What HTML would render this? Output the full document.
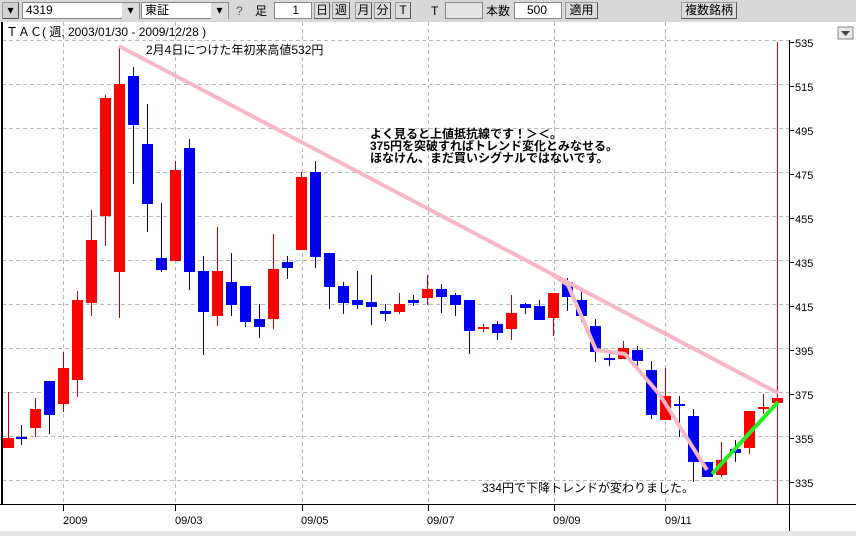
<!DOCTYPE html>
<html><head><meta charset="utf-8"><style>
body{margin:0;width:856px;height:536px;overflow:hidden;background:#fff;font-family:"Liberation Sans","Noto Sans CJK JP",sans-serif;}
.tb{position:absolute;left:0;top:0;width:856px;height:22px;background:#d8d8d8;}
.bx{position:absolute;top:2px;height:17px;background:#fff;border:1px solid #888;box-sizing:border-box;font-size:12px;line-height:15px;}
.bt{position:absolute;top:2px;height:17px;border:1px solid #999;border-right-color:#555;border-bottom-color:#555;box-sizing:border-box;font-size:12px;line-height:15px;text-align:center;background:#dcdcdc;}
.t{position:absolute;font-size:12px;line-height:14px;white-space:nowrap;}
</style></head><body>
<div class="tb">
<div class="bt" style="left:2px;width:17px;background:#d0d0d0">▾</div>
<div class="bx" style="left:22px;width:118px;padding-left:3px">4319</div>
<div class="bt" style="left:122px;width:17px;border:none;top:3px">▾</div>
<div class="bx" style="left:141px;width:88px;padding-left:3px">東証</div>
<div class="bt" style="left:211px;width:17px;border:none;top:3px">▾</div>
<div class="t" style="left:236px;top:4px;color:#555">?</div>
<div class="t" style="left:255px;top:4px">足</div>
<div class="bx" style="left:274px;width:38px;text-align:right;padding-right:12px">1</div>
<div class="bt" style="left:314px;width:16px">日</div>
<div class="bt" style="left:332px;width:18px">週</div>
<div class="bt" style="left:355px;width:17px">月</div>
<div class="bt" style="left:374px;width:17px">分</div>
<div class="bt" style="left:395px;width:16px">T</div>
<div class="t" style="left:431px;top:4px">T</div>
<div class="bx" style="left:445px;width:38px;background:#e4e4e4"></div>
<div class="t" style="left:486px;top:4px">本数</div>
<div class="bx" style="left:514px;width:48px;text-align:right;padding-right:14px">500</div>
<div class="bt" style="left:565px;width:33px">適用</div>
<div class="bt" style="left:681px;width:56px">複数銘柄</div>
</div>
<svg width="856" height="536" style="position:absolute;left:0;top:0" xmlns="http://www.w3.org/2000/svg">
<rect x="0" y="22" width="856" height="514" fill="#fff"/>
<g stroke="#b8b8b8" stroke-dasharray="4,3" stroke-width="1">
<line x1="2" y1="40.5" x2="789" y2="40.5"/><line x1="2" y1="84.5" x2="789" y2="84.5"/><line x1="2" y1="128.5" x2="789" y2="128.5"/><line x1="2" y1="172.5" x2="789" y2="172.5"/><line x1="2" y1="216.5" x2="789" y2="216.5"/><line x1="2" y1="260.5" x2="789" y2="260.5"/><line x1="2" y1="304.5" x2="789" y2="304.5"/><line x1="2" y1="348.5" x2="789" y2="348.5"/><line x1="2" y1="392.5" x2="789" y2="392.5"/><line x1="2" y1="436.5" x2="789" y2="436.5"/><line x1="2" y1="480.5" x2="789" y2="480.5"/>
<line x1="63.5" y1="22" x2="63.5" y2="504"/><line x1="175.5" y1="22" x2="175.5" y2="504"/><line x1="302.5" y1="22" x2="302.5" y2="504"/><line x1="428.5" y1="22" x2="428.5" y2="504"/><line x1="554.5" y1="22" x2="554.5" y2="504"/><line x1="665.5" y1="22" x2="665.5" y2="504"/>
</g>
<line x1="2" y1="22" x2="2" y2="504" stroke="#000" stroke-width="2"/>
<line x1="0" y1="504.5" x2="856" y2="504.5" stroke="#000"/>
<line x1="789.5" y1="40" x2="789.5" y2="536" stroke="#000"/>
<line x1="777.5" y1="42" x2="777.5" y2="504" stroke="#d01010"/>
<g stroke="#000"><line x1="63.5" y1="504" x2="63.5" y2="511"/><line x1="175.5" y1="504" x2="175.5" y2="511"/><line x1="302.5" y1="504" x2="302.5" y2="511"/><line x1="428.5" y1="504" x2="428.5" y2="511"/><line x1="554.5" y1="504" x2="554.5" y2="511"/><line x1="665.5" y1="504" x2="665.5" y2="511"/>
<line x1="789" y1="42.5" x2="794" y2="42.5"/><line x1="789" y1="86.5" x2="794" y2="86.5"/><line x1="789" y1="130.5" x2="794" y2="130.5"/><line x1="789" y1="174.5" x2="794" y2="174.5"/><line x1="789" y1="218.5" x2="794" y2="218.5"/><line x1="789" y1="262.5" x2="794" y2="262.5"/><line x1="789" y1="306.5" x2="794" y2="306.5"/><line x1="789" y1="350.5" x2="794" y2="350.5"/><line x1="789" y1="394.5" x2="794" y2="394.5"/><line x1="789" y1="438.5" x2="794" y2="438.5"/><line x1="789" y1="482.5" x2="794" y2="482.5"/></g>
<g font-family="Liberation Sans,sans-serif" font-size="11" fill="#000">
<text x="795" y="47">535</text><text x="795" y="91">515</text><text x="795" y="135">495</text><text x="795" y="179">475</text><text x="795" y="223">455</text><text x="795" y="267">435</text><text x="795" y="311">415</text><text x="795" y="355">395</text><text x="795" y="399">375</text><text x="795" y="443">355</text><text x="795" y="487">335</text>
<text x="63" y="524">2009</text><text x="175" y="524">09/03</text><text x="301" y="524">09/05</text><text x="427" y="524">09/07</text><text x="553" y="524">09/09</text><text x="665" y="524">09/11</text>
</g>
<rect x="0" y="531" width="856" height="5" fill="#e6e6e6"/>
<rect x="838" y="27" width="15" height="12" fill="#e8e8e8" stroke="#888"/><path d="M841 31h9l-4.5 5z" fill="#444"/>
<g id="c"></g>
<polyline points="119,46 778,393" stroke="#f6b8c6" stroke-width="4" fill="none"/>
<polyline points="553,275 568,285 596,350 625,354 660,395 707,470" stroke="#f6b8c6" stroke-width="4" fill="none" stroke-linejoin="round"/>
<line x1="712" y1="474" x2="778" y2="402" stroke="#22ee22" stroke-width="4"/>
<g font-family="Liberation Sans,Noto Sans CJK JP,sans-serif" font-size="12" fill="#000">
<text x="6" y="36">ＴＡＣ( 週, 2003/01/30 - 2009/12/28 )</text>
<text x="146" y="54">2月4日につけた年初来高値532円</text>
<text x="482" y="492">334円で下降トレンドが変わりました。</text>
<g font-weight="bold"><text x="370" y="138">よく見ると上値抵抗線です！＞＜。</text><text x="370" y="150">375円を突破すればトレンド変化とみなせる。</text><text x="370" y="162">ほなけん、まだ買いシグナルではないです。</text></g>
</g>
</svg>
<script>
var d=[[8,'r',392,448,438,448],[21,'b',425,445,437,439],[35,'r',398,437,409,428],[49,'b',381,434,381,415],[63,'r',352,412,368,404],[77,'r',291,397,300,380],[91,'r',210,316,240,303],[105,'r',95,246,98,216],[119,'r',46,318,84,272],[133,'b',67,184,76,125],[147,'b',104,232,144,204],[161,'b',203,272,258,270],[175,'r',161,261,170,261],[189,'b',139,290,148,272],[203,'b',256,355,271,312],[217,'r',227,326,271,316],[231,'b',253,316,282,305],[245,'b',286,327,286,322],[259,'b',304,338,319,327],[273,'r',234,329,269,319],[287,'b',256,279,262,268],[301,'r',172,250,177,250],[315,'b',161,268,172,257],[329,'b',253,309,253,287],[343,'b',282,314,286,303],[357,'b',271,309,300,305],[371,'b',275,325,302,307],[385,'b',304,321,311,314],[399,'r',293,314,304,312],[413,'b',295,306,300,303],[427,'r',275,305,289,298],[441,'b',284,313,289,297],[455,'b',293,316,295,305],[469,'b',300,354,300,331],[483,'r',324,332,327,329],[497,'b',321,340,324,333],[511,'r',295,340,313,329],[525,'b',303,314,304,308],[539,'b',300,320,306,320],[553,'r',293,336,293,318],[567,'b',278,311,282,297],[581,'b',291,322,300,316],[595,'b',319,362,326,352],[609,'b',350,366,358,360],[623,'r',341,359,348,359],[637,'b',346,368,350,361],[651,'b',361,419,370,415],[665,'r',368,420,396,420],[679,'b',396,437,404,406],[693,'b',409,482,416,462],[707,'b',462,477,462,477],[721,'r',442,477,460,475],[735,'b',440,462,449,453],[749,'r',411,454,411,448],[763,'r',394,414,407,409],[777,'r',398,403,398,403]];
var s='';d.forEach(function(c){var col=c[1]=='r'?'#ff0000':'#0000ee',wc=c[1]=='r'?'#c00000':'#000080';
s+='<line x1="'+(c[0]+.5)+'" y1="'+c[2]+'" x2="'+(c[0]+.5)+'" y2="'+c[3]+'" stroke="'+wc+'" stroke-width="1"/>';
var h=Math.max(c[5]-c[4],2);s+='<rect x="'+(c[0]-5)+'" y="'+c[4]+'" width="11" height="'+h+'" fill="'+col+'"/>';});
document.getElementById('c').innerHTML=s;
</script>
</body></html>
